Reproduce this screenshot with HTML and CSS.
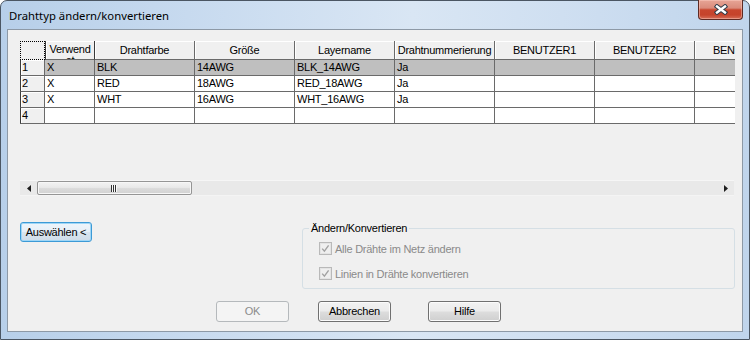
FILE: index.html
```html
<!DOCTYPE html>
<html lang="de">
<head>
<meta charset="utf-8">
<title>Drahttyp ändern/konvertieren</title>
<link rel="stylesheet" href="styles.css">
</head>
<body>
<div class="window">
  <div class="titlebar">
    <span class="title">Drahttyp ändern/konvertieren</span>
    <div class="close">
      <svg width="14" height="11" viewBox="0 0 14 11"><path d="M3 2.5 L11 8.5 M11 2.5 L3 8.5" stroke="#2f3b48" stroke-width="4.4" stroke-linecap="square" fill="none"/><path d="M3 2.5 L11 8.5 M11 2.5 L3 8.5" stroke="#ffffff" stroke-width="2.4" stroke-linecap="square" fill="none"/></svg>
    </div>
  </div>
  <div class="client">
    <div class="gridbox">
      <div class="grid">
        <div class="corner"></div>
        <div class="hd wrap">Verwend<br>et</div>
        <div class="hd">Drahtfarbe</div>
        <div class="hd">Größe</div>
        <div class="hd">Layername</div>
        <div class="hd">Drahtnummerierung</div>
        <div class="hd">BENUTZER1</div>
        <div class="hd">BENUTZER2</div>
        <div class="hd">BENUTZER3</div>

        <div class="rh">1</div>
        <div class="c sel">X</div>
        <div class="c sel">BLK</div>
        <div class="c sel">14AWG</div>
        <div class="c sel">BLK_14AWG</div>
        <div class="c sel">Ja</div>
        <div class="c sel"></div>
        <div class="c sel"></div>
        <div class="c sel"></div>

        <div class="rh">2</div>
        <div class="c">X</div>
        <div class="c">RED</div>
        <div class="c">18AWG</div>
        <div class="c">RED_18AWG</div>
        <div class="c">Ja</div>
        <div class="c"></div>
        <div class="c"></div>
        <div class="c"></div>

        <div class="rh">3</div>
        <div class="c">X</div>
        <div class="c">WHT</div>
        <div class="c">16AWG</div>
        <div class="c">WHT_16AWG</div>
        <div class="c">Ja</div>
        <div class="c"></div>
        <div class="c"></div>
        <div class="c"></div>

        <div class="rh">4</div>
        <div class="c"></div>
        <div class="c"></div>
        <div class="c"></div>
        <div class="c"></div>
        <div class="c"></div>
        <div class="c"></div>
        <div class="c"></div>
        <div class="c"></div>
      </div>
      <div class="hscroll">
        <div class="arrow"><svg width="4" height="7" viewBox="0 0 4 7"><path d="M4 0 L0 3.5 L4 7 Z" fill="#1e1e1e"/></svg></div>
        <div class="thumb"><svg width="7" height="7" viewBox="0 0 7 7"><rect x="0" y="0" width="1" height="7" fill="#333"/><rect x="2" y="0" width="1" height="7" fill="#333"/><rect x="4" y="0" width="1" height="7" fill="#333"/><rect x="1" y="0" width="1" height="7" fill="#fafafa"/><rect x="3" y="0" width="1" height="7" fill="#fafafa"/><rect x="5" y="0" width="1" height="7" fill="#fafafa"/></svg></div>
        <div class="track"></div>
        <div class="arrow"><svg width="4" height="7" viewBox="0 0 4 7"><path d="M0 0 L4 3.5 L0 7 Z" fill="#1e1e1e"/></svg></div>
      </div>
    </div>

    <div class="mid">
      <button class="btn default">Auswählen &lt;</button>
      <fieldset class="group">
        <legend>Ändern/Konvertieren</legend>
        <div class="checks">
          <div class="chk">
            <svg width="13" height="13" viewBox="0 0 13 13"><rect x="0.5" y="0.5" width="12" height="12" fill="#f4f4f4" stroke="#b9b9b9"/><rect x="1.5" y="1.5" width="10" height="10" fill="#efefef" stroke="#e4e4e4"/><path d="M3.2 6.6 L5.4 9.2 L9.6 3.4" fill="none" stroke="#a2a2a2" stroke-width="1.4"/></svg>
            <span>Alle Drähte im Netz ändern</span>
          </div>
          <div class="chk">
            <svg width="13" height="13" viewBox="0 0 13 13"><rect x="0.5" y="0.5" width="12" height="12" fill="#f4f4f4" stroke="#b9b9b9"/><rect x="1.5" y="1.5" width="10" height="10" fill="#efefef" stroke="#e4e4e4"/><path d="M3.2 6.6 L5.4 9.2 L9.6 3.4" fill="none" stroke="#a2a2a2" stroke-width="1.4"/></svg>
            <span>Linien in Drähte konvertieren</span>
          </div>
        </div>
      </fieldset>
    </div>

    <div class="actions">
      <button class="btn disabled">OK</button>
      <button class="btn b-cancel">Abbrechen</button>
      <button class="btn b-help">Hilfe</button>
    </div>
  </div>
</div>
</body>
</html>
```

FILE: styles.css
```css
html, body {
  margin: 0;
  padding: 0;
}
body {
  width: 750px;
  height: 340px;
  overflow: hidden;
  background: #ffffff;
  font-family: "Liberation Sans", Arial, sans-serif;
  font-size: 11px;
  letter-spacing: -0.25px;
  color: #000;
}

.window {
  box-sizing: border-box;
  width: 750px;
  height: 340px;
  border: 1px solid #4b5663;
  border-radius: 7px 7px 0 0;
  background: linear-gradient(90deg, #b7cfe9 0%, #c7daef 25%, #d9e6f4 55%, #cfdff1 75%, #c0d5ec 100%);
  display: flex;
  flex-direction: column;
  padding: 0 6px 7px 6px;
}

.titlebar {
  height: 28px;
  flex: none;
  display: flex;
  justify-content: space-between;
  align-items: flex-start;
}
.title {
  font-family: "Noto Sans", "Liberation Sans", sans-serif;
  font-size: 11.3px;
  letter-spacing: 0;
  line-height: 16px;
  margin: 7px 0 0 2px;
  color: #000;
}
.close {
  box-sizing: border-box;
  width: 45px;
  height: 20px;
  margin-top: -1px;
  border: 1px solid #5e2a23;
  border-top: none;
  border-radius: 0 0 4px 4px;
  background: linear-gradient(180deg, #e7a596 0%, #da8b7b 42%, #c8462e 52%, #c5432b 78%, #d66f58 100%);
  box-shadow: inset 0 0 0 1px rgba(255, 210, 200, 0.45);
  display: flex;
  align-items: center;
  justify-content: center;
}

.client {
  flex: 1;
  box-sizing: border-box;
  border: 1px solid #8d99a6;
  background: #f0f0f0;
  padding: 11px 0 0 12px;
  display: flex;
  flex-direction: column;
}

.gridbox {
  width: 715px;
  height: 155px;
  display: flex;
  flex-direction: column;
  justify-content: space-between;
}
.grid {
  width: 715px;
  overflow: hidden;
  display: grid;
  grid-template-columns: 25px 50px repeat(7, 100px);
  grid-template-rows: 19px repeat(4, 16px);
}
.grid > div {
  box-sizing: border-box;
  white-space: nowrap;
  overflow: hidden;
}
.corner {
  border: 1px dotted #000;
  background: #f0f0f0;
}
.hd {
  background: #f0f0f0;
  border-right: 1px solid #6a6a6a;
  border-bottom: 1px solid #6a6a6a;
  box-shadow: inset 1px 1px 0 #ffffff;
  display: flex;
  align-items: center;
  justify-content: center;
  line-height: 13px;
  padding-top: 1px;
}
.hd.wrap {
  display: block;
  text-align: center;
  line-height: 11px;
  padding-top: 3px;
  white-space: normal;
  border-left: 1px solid #3a3a3a;
  border-right-color: #3a3a3a;
}
.rh {
  background: #f0f0f0;
  border-left: 1px solid #3c3c3c;
  border-right: 1px solid #6a6a6a;
  border-bottom: 1px solid #6a6a6a;
  box-shadow: inset 1px 1px 0 #ffffff;
  padding-left: 1px;
  line-height: 15px;
}
.c {
  background: #ffffff;
  border-right: 1px solid #6a6a6a;
  border-bottom: 1px solid #6a6a6a;
  padding-left: 2px;
  line-height: 15px;
}
.c.sel {
  background: #bfbfbf;
}

.hscroll {
  width: 714px;
  height: 16px;
  box-sizing: border-box;
  background: #e9e9e9;
  border-top: 1px solid #f6f6f6;
  border-bottom: 1px solid #f4f4f4;
  display: flex;
  align-items: center;
}
.arrow {
  width: 17px;
  height: 14px;
  display: flex;
  align-items: center;
  justify-content: center;
}
.thumb {
  box-sizing: border-box;
  width: 155px;
  height: 14px;
  border: 1px solid #959595;
  border-radius: 2px;
  background: linear-gradient(180deg, #f3f3f3 0%, #e9e9e9 45%, #dadada 55%, #d2d2d2 100%);
  box-shadow: inset 0 0 0 1px #f7f7f7;
  display: flex;
  align-items: center;
  justify-content: center;
}
.track {
  flex: 1;
}

.mid {
  width: 715px;
  margin-top: 26px;
  display: flex;
  justify-content: space-between;
  align-items: flex-start;
}

.btn {
  box-sizing: border-box;
  width: 73px;
  height: 21px;
  padding: 0;
  border: 1px solid #707070;
  border-radius: 3px;
  background: linear-gradient(180deg, #f2f2f2 0%, #ebebeb 48%, #dddddd 52%, #cfcfcf 100%);
  box-shadow: inset 0 0 0 1px #fbfbfb;
  font-family: "Liberation Sans", Arial, sans-serif;
  font-size: 11px;
  letter-spacing: -0.25px;
  color: #000;
  line-height: 17px;
}
.btn.default {
  width: 72px;
  height: 20px;
  border-color: #3c9ad6;
  box-shadow: inset 0 0 0 1px #9fd6f6;
  background: linear-gradient(180deg, #eef5fb 0%, #e6eff7 48%, #d9e5ef 52%, #cfdce8 100%);
}
.btn.disabled {
  border-color: #b5b9bc;
  background: #f4f4f4;
  box-shadow: none;
  color: #8b8b8b;
}

.group {
  box-sizing: border-box;
  width: 433px;
  margin: 0;
  padding: 0;
  border: 1px solid #d5dfe5;
  border-radius: 3px;
  min-width: 0;
}
.group legend {
  margin-left: 6px;
  padding: 0 2px;
  line-height: 13px;
  color: #000;
}
.checks {
  padding: 1px 0 2px 16px;
}
.chk {
  height: 25px;
  display: flex;
  align-items: center;
  gap: 3px;
  color: #8a8a8a;
}
.chk svg {
  flex: none;
}

.actions {
  margin-top: 12px;
  padding-left: 196px;
  display: flex;
}
.b-cancel {
  margin-left: 29px;
}
.b-help {
  margin-left: 37px;
}
```
